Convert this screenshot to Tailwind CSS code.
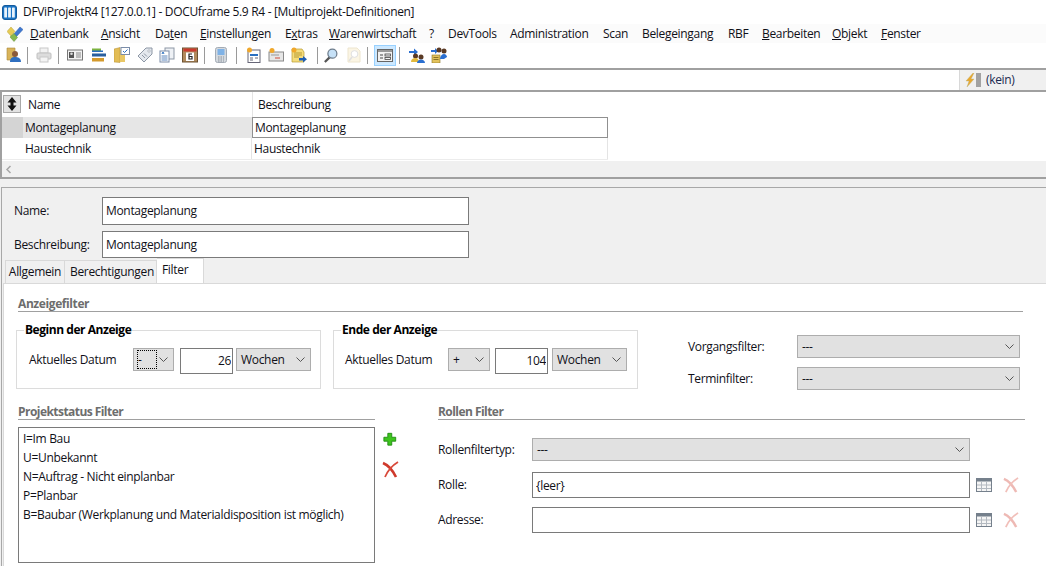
<!DOCTYPE html>
<html lang="de">
<head>
    <meta charset="UTF-8">
    <title>DFViProjektR4</title>
    <script src="https://cdn.jsdelivr.net/npm/@tailwindcss/browser@4"></script>
</head>
<body class="bg-white w-[1046px] h-[566px] overflow-hidden font-['Open_Sans','Noto_Sans',sans-serif] text-[12px] tracking-[-0.32px] text-[#101018]">
    <!-- titel -->
    <div class="h-6 flex items-center pl-[2px] gap-[6px]">
        <svg width="15" height="15" viewBox="0 0 15 15"><rect x="0.5" y="0.5" width="14" height="14" rx="2.5" fill="#1b74c4" stroke="#145a9c"/><rect x="2.2" y="2.5" width="2.8" height="10" rx=".5" fill="#e8f2fb"/><rect x="6.100" y="2.5" width="2.8" height="10" rx=".5" fill="#e8f2fb"/><rect x="10" y="2.5" width="2.8" height="10" rx=".5" fill="#e8f2fb"/></svg>
        <span>DFViProjektR4 [127.0.0.1] - DOCUframe 5.9 R4 - [Multiprojekt-Definitionen]</span>
    </div>
    <!-- menu -->
    <div class="h-[19px] flex items-center bg-[#fbfbfb]">
        <svg class="ml-[7px] mr-[7px]" width="16" height="16" viewBox="0 0 16 16"><path d="M0 5.500L4 1l4 4.500-4 4.500z" fill="#e6cb55" stroke="#b9a23a" stroke-width=".5"/><path d="M7 8l6-7 3 2.500-6.500 7z" fill="#3f78d0" stroke="#2a5aa8" stroke-width=".5"/><path d="M3 11l4-3.500 3.500 4L7 15.500z" fill="#86b84e" stroke="#5f8d33" stroke-width=".5"/></svg>
        <span class="w-[71px]"><u>D</u>atenbank</span>
        <span class="w-[54px]"><u>A</u>nsicht</span>
        <span class="w-[45px]">Da<u>t</u>en</span>
        <span class="w-[85px]"><u>E</u>instellungen</span>
        <span class="w-[44px]">E<u>x</u>tras</span>
        <span class="w-[100px]"><u>W</u>arenwirtschaft</span>
        <span class="w-[19px]">?</span>
        <span class="w-[62px]">DevTools</span>
        <span class="w-[93px]">Administration</span>
        <span class="w-[39px]">Scan</span>
        <span class="w-[86px]">Belegeingang</span>
        <span class="w-[34px]">RBF</span>
        <span class="w-[70px]"><u>B</u>earbeiten</span>
        <span class="w-[49px]"><u>O</u>bjekt</span>
        <span><u>F</u>enster</span>
    </div>
    <!-- toolbar -->
    <div class="h-[27px] flex items-center border-b-2 border-[#a0a0a0] pl-[6px] pb-[1px]">
        <svg class="w-4 h-4" viewBox="0 0 16 16"><path d="M1 1h8v12H1z" fill="#d9b45a" stroke="#a8863a" stroke-width=".6"/><circle cx="9" cy="7" r="3" fill="#8a5a3a"/><path d="M4 15c0-4 2-5 5-5s6 1 6 5z" fill="#2f6fc0"/></svg>
        <i class="w-px h-[17px] bg-[#9a9a9a] ml-[5px]"></i>
        <svg class="w-4 h-4 ml-2" viewBox="0 0 16 16"><rect x="4" y="1" width="8" height="5" fill="#f2f2f2" stroke="#c8c8c8"/><rect x="1" y="6" width="14" height="6" rx="1" fill="#dcdcdc" stroke="#c0c0c0"/><rect x="4" y="10" width="8" height="5" fill="#f4f4f4" stroke="#c8c8c8"/></svg>
        <i class="w-px h-[17px] bg-[#9a9a9a] ml-[6px]"></i>
        <svg class="w-4 h-4 ml-2" viewBox="0 0 16 16"><rect x=".5" y="3" width="15" height="10" fill="#f2f2f2" stroke="#777"/><rect x="2" y="5" width="5" height="6" fill="#555"/><circle cx="4.500" cy="6.800" r="1.300" fill="#ddd"/><path d="M9 6h5M9 8h5M9 10h5" stroke="#888"/></svg>
        <svg class="w-4 h-4 ml-2" viewBox="0 0 16 16"><rect x="1" y="1.500" width="9" height="3.500" fill="#7bb23f"/><rect x="1" y="3.500" width="11" height="1.500" fill="#2a6fc0"/><rect x="1" y="6.500" width="14" height="3" fill="#2a5f9e"/><rect x="1" y="11" width="12" height="3.500" fill="#d49a2c"/></svg>
        <svg class="w-4 h-4 ml-[7px]" viewBox="0 0 16 16"><path d="M0 2l6-1.500v15L0 15z" fill="#e3bd55" stroke="#b08f36" stroke-width=".5"/><rect x="6" y="3" width="5" height="12" fill="#e9c765"/><rect x="7" y=".5" width="8.500" height="7" fill="#fff" stroke="#7a8ca8"/><path d="M9 4l1.500 1.500L13.500 2.500" stroke="#2a6fc0" fill="none"/></svg>
        <svg class="w-4 h-4 ml-[7px]" viewBox="0 0 16 16"><path d="M1 9l8-8h6v6l-8 8z" fill="#e4e8ee" stroke="#8d97a5"/><circle cx="12" cy="4" r="1.200" fill="#fff" stroke="#8d97a5" stroke-width=".6"/><path d="M5 8l3 3M7 6.500l3 3" stroke="#8d97a5"/></svg>
        <svg class="w-4 h-4 ml-[6px]" viewBox="0 0 16 16"><rect x="6" y="1" width="9" height="11" fill="#eef1f5" stroke="#8d97a5"/><rect x="1" y="4" width="9" height="11" fill="#fff" stroke="#7a8ca8"/><path d="M3 7l1-2 1 2" stroke="#2a6fc0" fill="none"/><path d="M2.500 9h6M2.500 11h6M2.500 13h6" stroke="#5d86bd"/></svg>
        <svg class="w-4 h-4 ml-[7px]" viewBox="0 0 16 16"><rect x=".5" y="1" width="15" height="14" fill="#b08a5c" stroke="#6d5232"/><rect x="1.500" y="1.500" width="13" height="3" fill="#c93a2e"/><rect x="4" y="5.500" width="8" height="8.500" fill="#fff"/><path d="M10 7H7v5h3V9.500H7" stroke="#222" stroke-width="1.200" fill="none"/></svg>
        <i class="w-px h-[17px] bg-[#9a9a9a] ml-[6px]"></i>
        <svg class="w-4 h-4 ml-2" viewBox="0 0 16 16"><rect x="2.500" y=".5" width="11" height="15" rx="2" fill="#d4d9de" stroke="#a3abb5"/><rect x="4.500" y="2" width="7" height="6" fill="#7fb2e6"/><path d="M5 10h6M5 12h6M5 14h6" stroke="#8a929c" stroke-dasharray="1.500 1"/></svg>
        <i class="w-px h-[17px] bg-[#9a9a9a] ml-[7px]"></i>
        <svg class="w-4 h-4 ml-[9px]" viewBox="0 0 16 16"><rect x="2" y="3" width="12" height="12.500" fill="#fff" stroke="#667"/><path d="M4 8h8" stroke="#2a6fc0" stroke-width="2"/><path d="M4 11h3M4 13h3M9 11h3" stroke="#667"/><circle cx="3.500" cy="3" r="2.500" fill="#f0a82c"/></svg>
        <svg class="w-4 h-4 ml-[6px]" viewBox="0 0 16 16"><rect x="1" y="5" width="14.500" height="9" fill="#e6e6e6" stroke="#8a8a8a"/><path d="M7 11h5" stroke="#d04a3a"/><path d="M3 8h8" stroke="#999"/><circle cx="4" cy="3.500" r="2.500" fill="#f0a82c"/></svg>
        <svg class="w-4 h-4 ml-[7px]" viewBox="0 0 16 16"><path d="M1 2h10l2 3v10H1z" fill="#f4dc7c" stroke="#b89b34" stroke-width=".7"/><path d="M3 6h8M3 8h8M3 10h5" stroke="#b89b34"/><circle cx="3" cy="3" r="2.500" fill="#f0a82c"/><path d="M8 11h4V9l4 3.200-4 3.200v-2H8z" fill="#1f5fb4"/></svg>
        <i class="w-px h-[17px] bg-[#9a9a9a] ml-[10px]"></i>
        <svg class="w-[15px] h-[17px] ml-[5px]" viewBox="0 0 16 16"><path d="M2 15l5-5" stroke="#555" stroke-width="2.400"/><circle cx="10" cy="6" r="4.800" fill="#c6e1f7" stroke="#6c7b8a" stroke-width="1.300"/></svg>
        <svg class="w-4 h-4 ml-2 opacity-30" viewBox="0 0 16 16"><path d="M2 1h9l3 3v11H2z" fill="#f2dfa8" stroke="#c9ad63"/><circle cx="8.500" cy="7" r="3.400" fill="#fff" stroke="#999"/><path d="M6 10l-3 4" stroke="#999" stroke-width="1.500"/></svg>
        <i class="w-px h-[17px] bg-[#9a9a9a] ml-[5px]"></i>
        <div class="w-[22px] h-[21px] ml-[6px] bg-[#cce8ff] border border-[#99d1ff] flex items-center justify-center">
            <svg class="w-4 h-[13px]" viewBox="0 0 16 13"><rect x=".5" y=".5" width="15" height="12" fill="#f2f2f2" stroke="#666"/><rect x="1" y="1" width="14" height="2" fill="#999"/><path d="M3 6h3M3 9h3" stroke="#444"/><rect x="8" y="5" width="5.500" height="2" fill="none" stroke="#444" stroke-width=".8"/><rect x="8" y="8.500" width="5.500" height="2" fill="none" stroke="#444" stroke-width=".8"/></svg>
        </div>
        <i class="w-px h-[17px] bg-[#9a9a9a] ml-[3px]"></i>
        <svg class="w-4 h-4 ml-[9px]" viewBox="0 0 16 16"><path d="M0 4h5V1.500l4 3.500-4 3.500V6H0z" fill="#2a6fd0"/><circle cx="6.500" cy="9" r="2.500" fill="#5a3a24"/><path d="M2 15c0-3 2-4 4.500-4s3 1 3 4z" fill="#e2b93c"/><circle cx="12" cy="10" r="2.500" fill="#5a3a24"/><path d="M8 16c0-2 2-3.500 4-3.500s4 1.500 4 3.500z" fill="#2a6fd0"/></svg>
        <svg class="w-4 h-4 ml-[6px]" viewBox="0 0 16 16"><path d="M0 3h4V1l3 3-3 3V5H0z" fill="#2a6fd0"/><rect x="1" y="8" width="8" height="8" fill="#e2c25c" stroke="#8a7327" stroke-width=".6"/><path d="M2.500 10.500h5M2.500 12.500h5" stroke="#8a7327"/><circle cx="8" cy="3" r="2.500" fill="#5a3a24"/><circle cx="13" cy="4" r="2.500" fill="#5a3a24"/><path d="M9 12c0-3 2-5 4-5s3 2 3 3l-3 2z" fill="#2a6fd0"/></svg>
    </div>
    <!-- leiste kein -->
    <div class="h-[22px] flex justify-end border-b-2 border-[#a0a0a0]">
        <div class="w-[87px] bg-[#f0f0f0] border-l border-[#d8d8d8] flex items-center pl-[5px] gap-[1px]">
            <svg width="20" height="14" viewBox="0 0 20 14"><path d="M8 0L1 8h3l-2 6 7-8H6l3-6z" fill="#e9a82e" stroke="#b9b07a" stroke-width=".4"/><path d="M11 1h5M11 3h5M11 5h5M11 7h5M11 9h5M11 11h5M11 13h5" stroke="#555"/></svg>
            <span class="text-[#1a2a50]">(kein)</span>
        </div>
    </div>
    <!-- tabelle -->
    <div class="h-[87px] border-b-2 border-l-2 border-[#a0a0a0]">
        <div class="h-[69px] w-[606px]">
            <div class="h-[25px] flex">
                <div class="w-[18px] h-[18px] mt-[3px] ml-px bg-[#e2e2e2] border border-[#a8a8a8] flex items-center justify-center">
                    <svg width="10" height="14" viewBox="0 0 10 14"><path d="M5 0l4.500 5.500H6.500v3h3L5 14 .5 8.500h3v-3h-3z" fill="#111"/></svg>
                </div>
                <div class="w-[232px] pl-[7px] flex items-center border-r border-[#e4e4e4]">Name</div>
                <div class="pl-[5px] flex items-center">Beschreibung</div>
            </div>
            <div class="h-[21px] flex items-center">
                <div class="w-[21px] h-full bg-[#d4d4d4]"></div>
                <div class="w-[229px] h-full bg-[#e6e6e6] pl-[2px] flex items-center">Montageplanung</div>
                <div class="w-[356px] h-full border border-[#909090] pl-[2px] flex items-center">Montageplanung</div>
            </div>
            <div class="h-[22px] flex items-center border-b border-[#ececec]">
                <div class="w-[21px]"></div>
                <div class="w-[229px] h-full border-r border-[#e4e4e4] pl-[2px] flex items-center">Haustechnik</div>
                <div class="pl-[2px] flex items-center border-r border-[#e4e4e4] w-[356px] h-full">Haustechnik</div>
            </div>
        </div>
        <div class="h-4 bg-[#f0f0f0] flex items-center pl-[3px]">
            <svg width="7" height="9" viewBox="0 0 7 9"><path d="M5.500 1L2 4.500 5.500 8" stroke="#a6a6a6" stroke-width="1.500" fill="none"/></svg>
        </div>
    </div>
    <!-- formular -->
    <div class="pt-2 pl-px bg-[#f0f0f0]">
    <div class="h-[379px] bg-[#f0f0f0] border-t border-l border-[#a8a8a8] pl-px">
        <div class="h-[70px] pt-[9px] flex flex-col gap-[6px]">
            <div class="flex items-center h-[28px]">
                <label class="w-[88px] pl-[11px]">Name:</label>
                <input class="w-[367px] h-[28px] ml-[11px] bg-white border border-[#7a7a7a] pl-[3px] pb-[2px]" value="Montageplanung">
            </div>
            <div class="flex items-center h-[27px]">
                <label class="w-[88px] pl-[11px]">Beschreibung:</label>
                <input class="w-[367px] h-[27px] ml-[11px] bg-white border border-[#7a7a7a] pl-[3px]" value="Montageplanung">
            </div>
        </div>
        <!-- tabs -->
        <div class="h-[25px] flex items-end pl-[2px]">
            <div class="w-[60px] h-[23px] bg-[#f0f0f0] border border-b-0 border-[#d9d9d9] flex items-center justify-center">Allgemein</div>
            <div class="w-[92px] h-[23px] bg-[#f0f0f0] border border-l-0 border-b-0 border-[#d9d9d9] flex items-center pl-[5px]">Berechtigungen</div>
            <div class="w-[47px] h-[25px] bg-white border border-l-0 border-b-0 border-[#d9d9d9] pl-[5px] flex items-center pb-[3px]">Filter</div>
        </div>
        <!-- filter -->
        <div class="h-[290px] bg-white border-t border-l border-[#d9d9d9] pl-[14px]">
            <div class="h-[28px] w-[1005px] border-b border-[#a0a0a0] font-bold tracking-[-0.4px] leading-none text-[#6d6d6d] flex items-end pb-px">Anzeigefilter</div>
            <div class="flex mt-[16px] h-[61px] -ml-[2px]">
                <fieldset class="w-[305px] h-[64px] border border-[#dcdcdc] -mt-[3px]">
                    <legend class="ml-[7px] px-px font-bold tracking-[-0.45px] text-black leading-[10px]">Beginn der Anzeige</legend>
                    <div class="flex items-start pt-[13px] pl-3">
                        <span class="w-[104px] h-[23px] flex items-center">Aktuelles Datum</span>
                        <div class="w-[41px] h-[23px] bg-[#e1e1e1] border border-[#adadad] flex items-center justify-between pl-[3px] pr-[5px]">
                            <span class="w-5 h-[19px] border border-dotted border-black flex items-center">-</span>
                            <svg width="9" height="5" viewBox="0 0 9 5"><path d="M.5.500l4 4 4-4" stroke="#555" fill="none"/></svg>
                        </div>
                        <input class="w-[53px] h-[26px] ml-[6px] border border-[#7a7a7a] text-right pr-px pb-[2px]" value="26">
                        <div class="w-[75px] h-[23px] ml-[3px] bg-[#e1e1e1] border border-[#adadad] flex items-center justify-between pl-1 pr-[5px]">
                            <span>Wochen</span>
                            <svg width="9" height="5" viewBox="0 0 9 5"><path d="M.5.500l4 4 4-4" stroke="#555" fill="none"/></svg>
                        </div>
                    </div>
                </fieldset>
                <fieldset class="w-[305px] h-[64px] ml-[12px] border border-[#dcdcdc] -mt-[3px]">
                    <legend class="ml-[7px] px-px font-bold tracking-[-0.45px] text-black leading-[10px]">Ende der Anzeige</legend>
                    <div class="flex items-start pt-[13px] pl-[11px]">
                        <span class="w-[103px] h-[23px] flex items-center">Aktuelles Datum</span>
                        <div class="w-[42px] h-[23px] bg-[#e1e1e1] border border-[#adadad] flex items-center justify-between pl-[4px] pr-[5px]">
                            <span>+</span>
                            <svg width="9" height="5" viewBox="0 0 9 5"><path d="M.5.500l4 4 4-4" stroke="#555" fill="none"/></svg>
                        </div>
                        <input class="w-[53px] h-[26px] ml-[5px] border border-[#7a7a7a] text-right pr-px pb-[2px]" value="104">
                        <div class="w-[75px] h-[23px] ml-1 bg-[#e1e1e1] border border-[#adadad] flex items-center justify-between pl-1 pr-[5px]">
                            <span>Wochen</span>
                            <svg width="9" height="5" viewBox="0 0 9 5"><path d="M.5.500l4 4 4-4" stroke="#555" fill="none"/></svg>
                        </div>
                    </div>
                </fieldset>
                <div class="ml-[50px] mt-[7px] flex flex-col gap-[9px]">
                    <div class="flex items-center h-[23px]">
                        <span class="w-[109px]">Vorgangsfilter:</span>
                        <div class="w-[223px] h-[23px] bg-[#e1e1e1] border border-[#adadad] flex items-center justify-between pl-1 pr-[5px]">
                            <span>---</span>
                            <svg width="9" height="5" viewBox="0 0 9 5"><path d="M.5.500l4 4 4-4" stroke="#555" fill="none"/></svg>
                        </div>
                    </div>
                    <div class="flex items-center h-[23px]">
                        <span class="w-[109px]">Terminfilter:</span>
                        <div class="w-[223px] h-[23px] bg-[#e1e1e1] border border-[#adadad] flex items-center justify-between pl-1 pr-[5px]">
                            <span>---</span>
                            <svg width="9" height="5" viewBox="0 0 9 5"><path d="M.5.500l4 4 4-4" stroke="#555" fill="none"/></svg>
                        </div>
                    </div>
                </div>
            </div>
            <div class="flex">
                <!-- status -->
                <div class="w-[357px]">
                    <div class="h-[31px] border-b border-[#a0a0a0] font-bold tracking-[-0.55px] leading-none text-[#6d6d6d] flex items-end pb-px">Projektstatus Filter</div>
                    <div class="h-[136px] mt-[7px] border border-[#7a7a7a] pl-1 pt-px leading-[19px]">
                        <p>I=Im Bau</p>
                        <p>U=Unbekannt</p>
                        <p>N=Auftrag - Nicht einplanbar</p>
                        <p>P=Planbar</p>
                        <p>B=Baubar (Werkplanung und Materialdisposition ist möglich)</p>
                    </div>
                </div>
                <div class="w-[63px] pt-[43px] pl-[8px] flex flex-col">
                    <svg width="14" height="14" viewBox="0 0 16 16"><path d="M5.500 1.500h4.500v4.500h4.500v4.500H10v4.500H5.500V10.500H1V6h4.500z" fill="#3ec41e" stroke="#1e8a10"/></svg>
                    <svg class="mt-[15px] -ml-px" width="17" height="17" viewBox="0 0 17 17"><path d="M1 2c5 2 10 8 13 14" stroke="#cf3a2c" stroke-width="2.600" fill="none"/><path d="M16 1C11 4 6 9 3 16" stroke="#d8493a" stroke-width="1.800" fill="none"/></svg>
                </div>
                <!-- rollen -->
                <div class="w-[587px]">
                    <div class="h-[31px] border-b border-[#a0a0a0] font-bold tracking-[-0.55px] leading-none text-[#6d6d6d] flex items-end pb-px">Rollen Filter</div>
                    <div class="flex items-center h-[23px] mt-[18px]">
                        <span class="w-[94px]">Rollenfiltertyp:</span>
                        <div class="w-[438px] h-[23px] bg-[#e1e1e1] border border-[#adadad] flex items-center justify-between pl-1 pr-[5px]">
                            <span>---</span>
                            <svg width="9" height="5" viewBox="0 0 9 5"><path d="M.5.500l4 4 4-4" stroke="#555" fill="none"/></svg>
                        </div>
                    </div>
                    <div class="flex items-center h-[26px] mt-[11px]">
                        <span class="w-[94px]">Rolle:</span>
                        <input class="w-[438px] h-[26px] border border-[#7a7a7a] pl-[3px]" value="{leer}">
                        <svg class="ml-[6px]" width="16" height="14" viewBox="0 0 16 14"><rect x=".5" y=".5" width="15" height="13" fill="#f5f5f5" stroke="#75808c"/><rect x="1" y="1" width="14" height="2.500" fill="#75808c"/><path d="M1 7h14M1 10.500h14M5.500 4v9M10.500 4v9" stroke="#b3b9c0"/></svg>
                        <svg class="ml-[11px] opacity-35" width="16" height="16" viewBox="0 0 17 17"><path d="M1 2c5 2 10 8 13 14" stroke="#cf3a2c" stroke-width="2.600" fill="none"/><path d="M16 1C11 4 6 9 3 16" stroke="#d8493a" stroke-width="1.800" fill="none"/></svg>
                    </div>
                    <div class="flex items-center h-[26px] mt-[9px]">
                        <span class="w-[94px]">Adresse:</span>
                        <input class="w-[438px] h-[26px] border border-[#7a7a7a] pl-[3px]">
                        <svg class="ml-[6px]" width="16" height="14" viewBox="0 0 16 14"><rect x=".5" y=".5" width="15" height="13" fill="#f5f5f5" stroke="#75808c"/><rect x="1" y="1" width="14" height="2.500" fill="#75808c"/><path d="M1 7h14M1 10.500h14M5.500 4v9M10.500 4v9" stroke="#b3b9c0"/></svg>
                        <svg class="ml-[11px] opacity-35" width="16" height="16" viewBox="0 0 17 17"><path d="M1 2c5 2 10 8 13 14" stroke="#cf3a2c" stroke-width="2.600" fill="none"/><path d="M16 1C11 4 6 9 3 16" stroke="#d8493a" stroke-width="1.800" fill="none"/></svg>
                    </div>
                </div>
            </div>
        </div>
    </div>
    </div>
</body>
</html>
